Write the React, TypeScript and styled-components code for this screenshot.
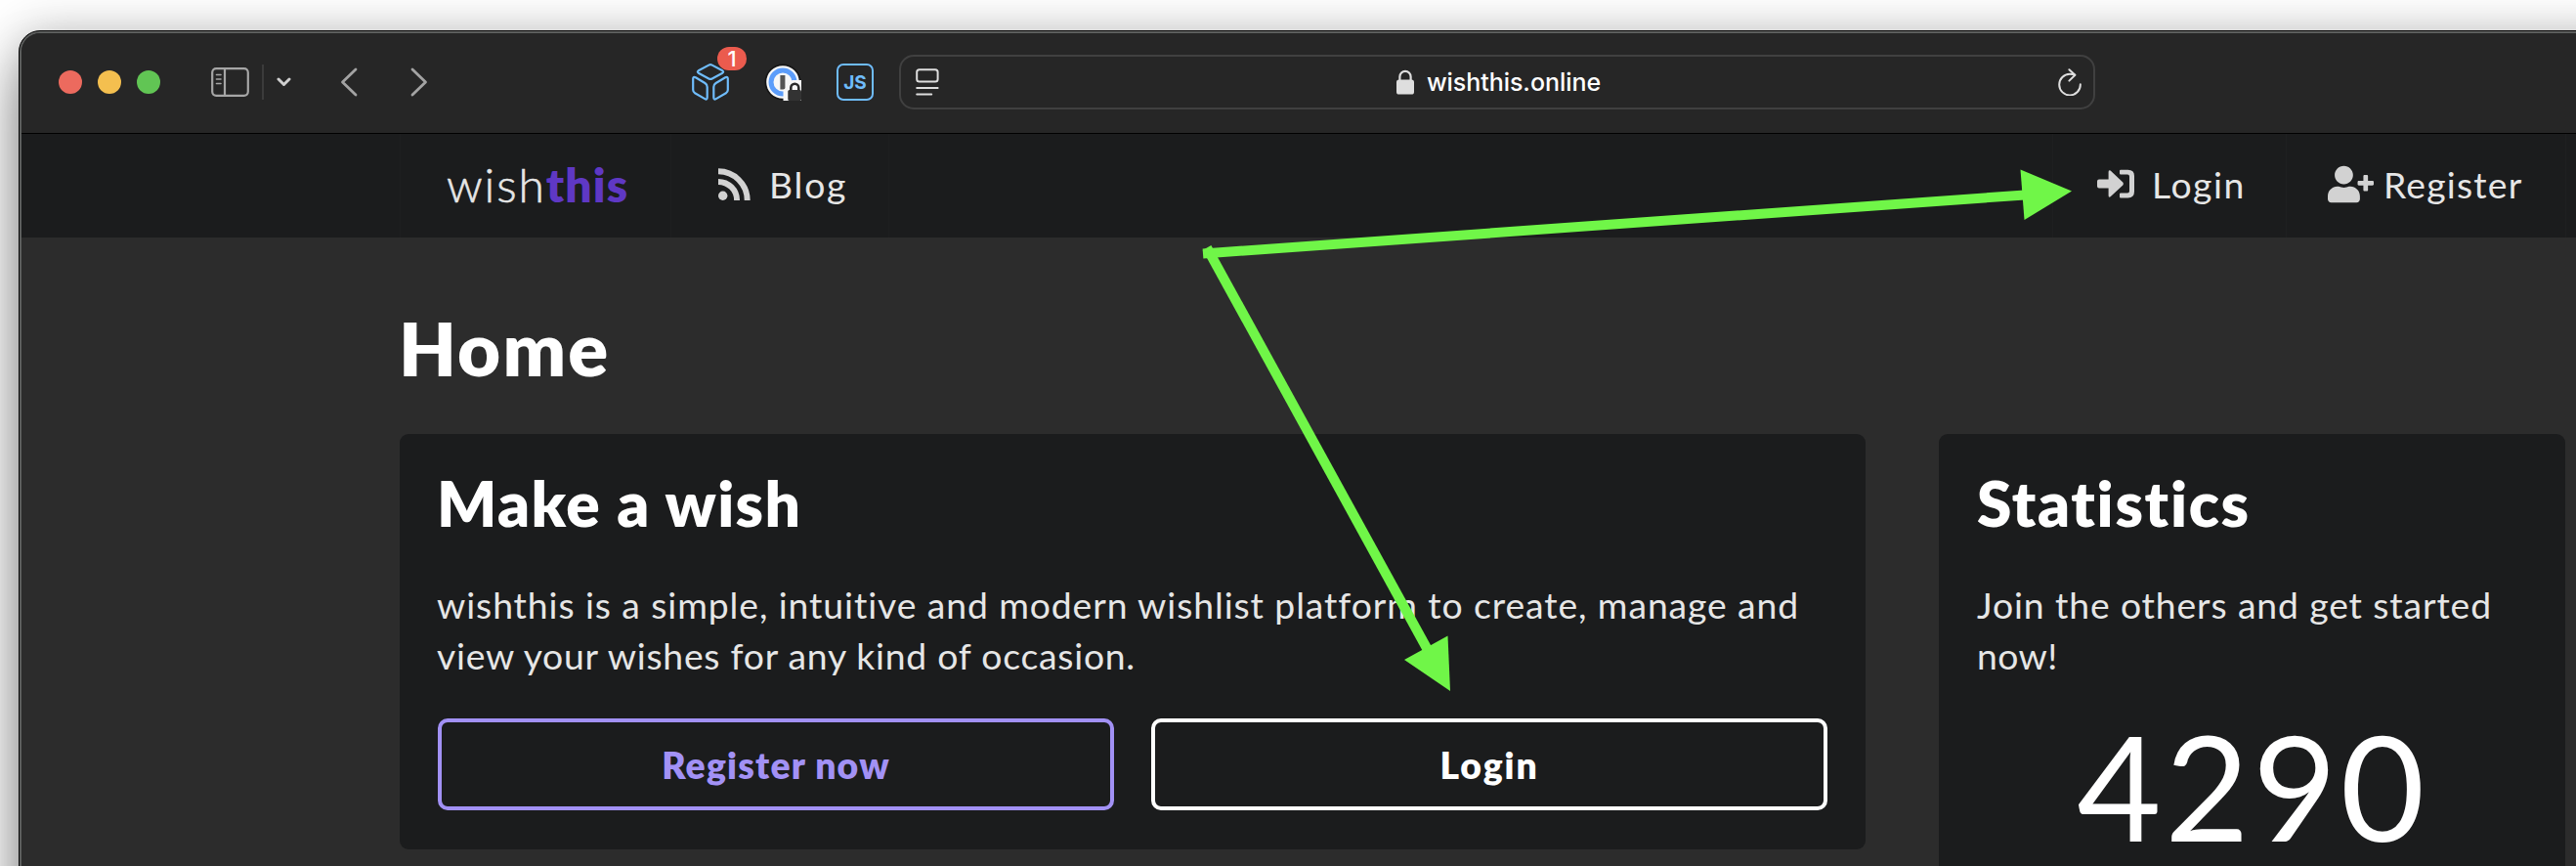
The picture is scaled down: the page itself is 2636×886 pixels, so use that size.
import React from "react";
import styled, { createGlobalStyle } from "styled-components";
import { FaUserPlus } from "react-icons/fa";

const Global = createGlobalStyle`
  * { box-sizing: border-box; }
  html, body { margin: 0; background: #fff; }
  h1, h2, p { margin: 0; }
`;

const Desktop = styled.div`
  position: relative;
  width: 2636px;
  height: 886px;
  overflow: hidden;
  padding: 31px 0 0 19px;
  background: #fff;
  font-family: Lato, "Liberation Sans", sans-serif;
  font-variant-ligatures: none;
`;

const BrowserWindow = styled.div`
  width: 2700px;
  height: 1000px;
  border: 1px solid #060606;
  border-radius: 22px;
  overflow: hidden;
  background: #2c2c2c;
  box-shadow: 0 36px 56px rgba(0, 0, 0, 0.4), 0 0 50px rgba(0, 0, 0, 0.22);
`;

const Inner = styled.div`
  height: 100%;
  border: 2px solid #5c5e5d;
  border-radius: 21px;
  overflow: hidden;
`;

const Toolbar = styled.div`
  display: flex;
  align-items: center;
  height: 103px;
  padding: 0 0 3px 38px;
  background: #262626;
  border-bottom: 1px solid #000;
`;

const Lights = styled.div`
  display: flex;
  gap: 16px;
  margin-right: 52px;
`;

const Light = styled.span<{ $color: string }>`
  width: 24px;
  height: 24px;
  border-radius: 50%;
  background: ${(p) => p.$color};
`;

const Slot = styled.div<{ $gap: number }>`
  position: relative;
  display: flex;
  margin-right: ${(p) => p.$gap}px;
  svg { display: block; }
`;

const Divider = styled.span`
  width: 2px;
  height: 36px;
  margin-right: 13px;
  background: #3b3b3b;
`;

const Badge = styled.span`
  position: absolute;
  left: 26px;
  top: -17px;
  width: 30px;
  height: 24px;
  border-radius: 12px;
  background: #eb5b4e;
  color: #fff;
  font: 500 22px/24px Inter, sans-serif;
  text-align: center;
`;

const JsBox = styled.div`
  width: 38px;
  height: 38px;
  margin-right: 26px;
  border: 2px solid #6fbcfb;
  border-radius: 7px;
  color: #6fbcfb;
  font: 700 19px/35px Inter, sans-serif;
  text-align: center;
`;

const AddressBar = styled.div`
  display: flex;
  align-items: center;
  justify-content: space-between;
  width: 1224px;
  height: 56px;
  padding: 0 12px 0 15px;
  border: 2px solid #404040;
  border-radius: 15px;
`;

const Address = styled.div`
  display: flex;
  align-items: center;
  gap: 13px;
  color: #fff;
  font: 500 25px/30px Inter, sans-serif;
  letter-spacing: -0.05px;
`;

const Nav = styled.nav`
  display: flex;
  height: 106px;
  padding-left: 387px;
  background: #1b1c1d;
  color: #e6e6e6;
  font-size: 37.3px;
`;

const NavItem = styled.a<{ $width: number; $pad: number; $gap?: number }>`
  display: flex;
  align-items: center;
  width: ${(p) => p.$width}px;
  padding: 0 0 4px ${(p) => p.$pad}px;
  gap: ${(p) => p.$gap ?? 0}px;
  border-left: 1px solid #1e1f20;
  white-space: nowrap;
  svg { display: block; flex: none; color: #d2d2d2; }
`;

const NavSpacer = styled.div`
  width: 1191px;
  border-left: 1px solid #1e1f20;
`;

const Track = styled.span<{ $ls: number }>`
  letter-spacing: ${(p) => p.$ls}px;
`;

const Wordmark = styled.span`
  font-size: 48px;
  font-weight: 300;
  -webkit-text-stroke: 0.6px currentColor;
  b {
    font-weight: 800;
    letter-spacing: 1.1px;
    color: #5f38c4;
    -webkit-text-stroke: 0;
  }
`;

const Page = styled.main`
  padding: 68px 0 0 387px;
`;

const Title = styled.h1`
  height: 133px;
  margin-left: -1px;
  color: #fff;
  font-size: 76px;
  font-weight: 800;
  line-height: 90px;
`;

const Columns = styled.div`
  display: flex;
  align-items: flex-start;
  gap: 75px;
`;

const Card = styled.section<{ $width: number; $height: number; $padLeft: number }>`
  width: ${(p) => p.$width}px;
  height: ${(p) => p.$height}px;
  padding: 33px 39px 0 ${(p) => p.$padLeft}px;
  border-radius: 9px;
  background: #1b1c1d;
`;

const CardTitle = styled.h2`
  margin-left: -1px;
  color: #fff;
  font-size: 64px;
  font-weight: 800;
  line-height: 76px;
`;

const Text = styled.p`
  margin: 40px 0 0 -1px;
  color: #e6e6e6;
  font-size: 37.3px;
  line-height: 52.3px;
  white-space: nowrap;
  span { display: block; }
`;

const Buttons = styled.div`
  display: flex;
  gap: 38px;
  margin-top: 37px;
`;

const Button = styled.a<{ $color: string }>`
  flex: 1;
  height: 94px;
  border: 4px solid ${(p) => p.$color};
  border-radius: 10px;
  color: ${(p) => p.$color};
  font-size: 37.3px;
  font-weight: 800;
  line-height: 87px;
  text-align: center;
`;

const Count = styled.div`
  margin-top: 31px;
  color: #fff;
  font-size: 149px;
  line-height: 150px;
  text-align: center;
`;

const Annotation = styled.svg`
  position: absolute;
  left: 0;
  top: 0;
`;

const SidebarIcon = () => (
  <svg width="39" height="30" viewBox="0 0 39 30" fill="none" stroke="#a6a6a6" strokeWidth="2.2">
    <rect x="1.2" y="1.2" width="36.6" height="27.6" rx="4" />
    <path d="M14 1v28" />
    <path d="M5.5 7.5h4.5M5.5 12h4.5M5.5 16.5h4.5" strokeWidth="1.6" strokeLinecap="round" />
  </svg>
);

const Chevron = ({ w, h, d, color, sw }: { w: number; h: number; d: string; color: string; sw: number }) => (
  <svg width={w} height={h} viewBox={`0 0 ${w} ${h}`} fill="none" stroke={color} strokeWidth={sw} strokeLinecap="round" strokeLinejoin="round">
    <path d={d} />
  </svg>
);

const CubeIcon = () => (
  <svg width="38" height="38" viewBox="0 0 38 38" fill="none" stroke="#6fbcfb" strokeWidth="2.2" strokeLinejoin="round">
    <path d="M17.3 1.6q1.7-.9 3.4 0l10.6 5.7q1.7 1.2 0 2.4l-10.6 5.8q-1.7.9-3.4 0l-10.6-5.8q-1.7-1.2 0-2.4z" />
    <path d="M3.8 14.3l9.6 5.7q2.3 1.5 2.3 3.9v10.7q0 2.9-2.4 1.5L3.1 30.3q-1.9-1.1-1.9-3.2V15.6q0-2.5 2.6-1.3z" />
    <path d="M34.2 14.3l-9.6 5.7q-2.3 1.5-2.3 3.9v10.7q0 2.9 2.4 1.5l10.2-5.8q1.9-1.1 1.9-3.2V15.6q0-2.5-2.6-1.3z" />
  </svg>
);

const KeyholeIcon = () => (
  <svg width="38" height="38" viewBox="0 0 38 38">
    <circle cx="19" cy="19" r="18.5" fill="#151515" />
    <circle cx="19" cy="19" r="16.8" fill="#f7f7f7" />
    <circle cx="19" cy="19" r="12" fill="none" stroke="#5c9dfa" strokeWidth="5" />
    <rect x="16.4" y="12" width="5" height="14.5" fill="#555" />
    <path d="M19.5 38V27l5-4 4-6h9.5v21z" fill="#f7f7f7" />
    <path d="M27.3 28v-3.2a4 4 0 0 1 8 0V28" fill="none" stroke="#2b2b2b" strokeWidth="2.6" />
    <rect x="24.3" y="27" width="13.7" height="11" rx="1.5" fill="#333" />
  </svg>
);

const ReaderIcon = () => (
  <svg width="24" height="28" viewBox="0 0 24 28" fill="none" stroke="#dedede" strokeWidth="2" strokeLinecap="round">
    <rect x="1.2" y="1.2" width="21.4" height="12.4" rx="2.6" />
    <path d="M1.2 20h21.4M1.2 26.6h15" />
  </svg>
);

const LockIcon = () => (
  <svg width="18" height="26" viewBox="0 0 18 26">
    <path d="M3.4 12V7.4a5.6 5.6 0 0 1 11.2 0V12" fill="none" stroke="#dedede" strokeWidth="2.2" />
    <rect x="0" y="10.5" width="18" height="15" rx="2.6" fill="#dedede" />
  </svg>
);

const ReloadIcon = () => (
  <svg width="24" height="28" viewBox="0 0 24 28" fill="none" stroke="#dedede" strokeWidth="2" strokeLinecap="round" strokeLinejoin="round">
    <path d="M22.8 16.2A10.8 10.8 0 1 1 12 5.8q3 0 5 .9" />
    <path d="M11.4 1.2l6 5.6-6 5.8" />
  </svg>
);

const FeedIcon = () => (
  <svg width="33" height="33" viewBox="0 0 33 33" fill="none" stroke="currentColor" strokeWidth="6">
    <circle cx="4.7" cy="28.3" r="4.7" fill="currentColor" stroke="none" />
    <path d="M0 13.9A19.1 19.1 0 0 1 19.1 33" />
    <path d="M0 3.3A29.7 29.7 0 0 1 29.7 33" />
  </svg>
);

const LoginIcon = () => (
  <svg width="38" height="30" viewBox="0 0 38 30" fill="currentColor">
    <path d="M2 10.600h9.600V3q0-2.600 2-1.400L26.300 13.400q1.300 1.500 0 3L13.600 28.300q-2 1.300-2-1.300v-7.500H2q-2 0-2-2v-4.900q0-2 2-2z" />
    <path d="M24 .7h7.500Q38 .7 38 7v16q0 6.400-6.500 6.400H24q-1 0-1-1v-3q0-1 1-1h7q2 0 2-2V7.600q0-2-2-2h-7q-1 0-1-1V1.700q0-1 1-1z" />
  </svg>
);

export default function App() {
  return (
    <Desktop>
      <Global />
      <BrowserWindow>
        <Inner>
          <Toolbar>
            <Lights>
              <Light $color="#ec6a5e" />
              <Light $color="#f4bf4f" />
              <Light $color="#61c554" />
            </Lights>
            <Slot $gap={13}><SidebarIcon /></Slot>
            <Divider />
            <Slot $gap={50}><Chevron w={15} h={10} d="M2 2l5.5 5.5L13 2" color="#cfcfcf" sw={3} /></Slot>
            <Slot $gap={54}><Chevron w={18} h={30} d="M16 2L2.5 15 16 28" color="#a3a3a3" sw={2.8} /></Slot>
            <Slot $gap={270}><Chevron w={18} h={30} d="M2 2l13.5 13L2 28" color="#a3a3a3" sw={2.8} /></Slot>
            <Slot $gap={36}><CubeIcon /><Badge>1</Badge></Slot>
            <Slot $gap={36}><KeyholeIcon /></Slot>
            <JsBox>JS</JsBox>
            <AddressBar>
              <ReaderIcon />
              <Address><LockIcon />wishthis.online</Address>
              <ReloadIcon />
            </AddressBar>
          </Toolbar>
          <Nav>
            <NavItem $width={277} $pad={47}>
              <Wordmark><Track $ls={1.9}>wish</Track><b>this</b></Wordmark>
            </NavItem>
            <NavItem $width={223} $pad={48} $gap={19}>
              <FeedIcon />
              <Track $ls={1.8}>Blog</Track>
            </NavItem>
            <NavSpacer />
            <NavItem $width={239} $pad={45} $gap={18}>
              <LoginIcon />
              <Track $ls={1.6}>Login</Track>
            </NavItem>
            <NavItem $width={286} $pad={42} $gap={10}>
              <FaUserPlus size={47} />
              <Track $ls={1.2}>Register</Track>
            </NavItem>
            <NavItem $width={80} $pad={0} />
          </Nav>
          <Page>
            <Title><Track $ls={2.2}>Home</Track></Title>
            <Columns>
              <Card $width={1500} $height={425} $padLeft={39}>
                <CardTitle><Track $ls={1.35}>Make a wish</Track></CardTitle>
                <Text>
                  <Track $ls={0.91}>wishthis is a simple, intuitive and modern wishlist platform to create, manage and</Track>
                  <Track $ls={0.76}>view your wishes for any kind of occasion.</Track>
                </Text>
                <Buttons>
                  <Button $color="#a291f5"><Track $ls={1.2}>Register now</Track></Button>
                  <Button $color="#ffffff"><Track $ls={1.9}>Login</Track></Button>
                </Buttons>
              </Card>
              <Card $width={641} $height={600} $padLeft={40}>
                <CardTitle><Track $ls={1.7}>Statistics</Track></CardTitle>
                <Text>
                  <Track $ls={0.88}>Join the others and get started</Track>
                  <Track $ls={0.4}>now!</Track>
                </Text>
                <Count><Track $ls={3.4}>4290</Track></Count>
              </Card>
            </Columns>
          </Page>
        </Inner>
      </BrowserWindow>
      <Annotation width="2636" height="886" viewBox="0 0 2636 886" fill="#70f648" stroke="#70f648">
        <path d="M1231 259.5L2072 199.5" strokeWidth="10" />
        <path d="M1235 253.5L1461 665" strokeWidth="10" />
        <path d="M2067.5 173.5L2120 195.5L2071.5 225z" stroke="none" />
        <path d="M1481.5 650.5L1484 707L1437 675z" stroke="none" />
      </Annotation>
    </Desktop>
  );
}
